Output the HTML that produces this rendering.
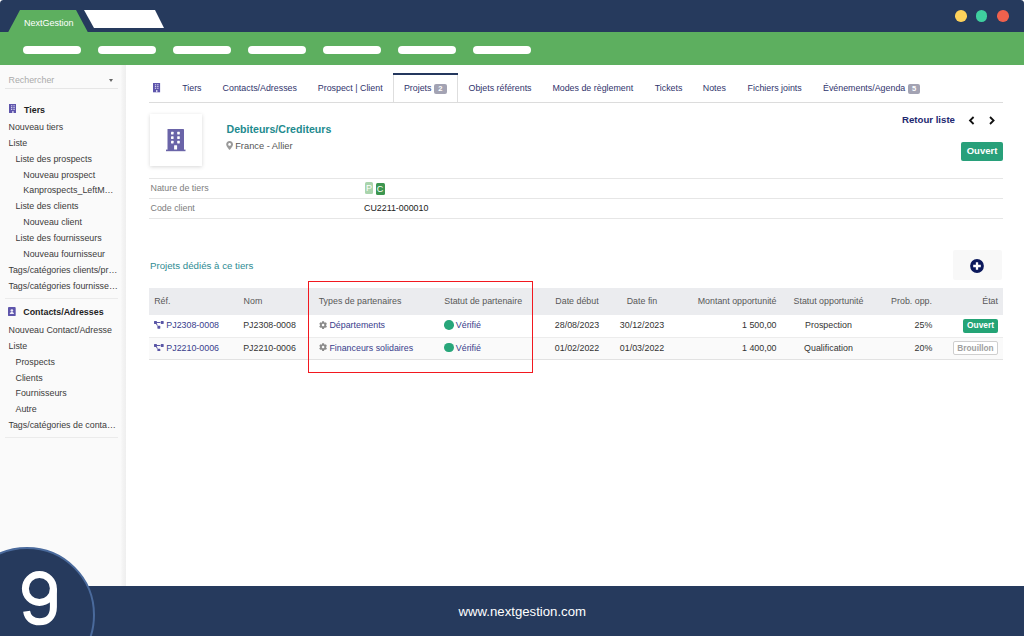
<!DOCTYPE html>
<html><head><meta charset="utf-8">
<style>
*{margin:0;padding:0;box-sizing:border-box}
html,body{width:1024px;height:636px;overflow:hidden;background:#fff}
body{position:relative;font-family:"Liberation Sans",sans-serif;font-size:8.87px;color:#333}
.a{position:absolute}
.t{position:absolute;white-space:nowrap;line-height:1}
.pill{position:absolute;top:45.8px;width:57.2px;height:8px;border-radius:4px;background:#fff}
.dot{position:absolute;top:10.1px;width:11.7px;height:11.7px;border-radius:50%}
.si{position:absolute;white-space:nowrap;line-height:1;color:#3a3a3a}
.tab{position:absolute;white-space:nowrap;line-height:1;color:#30346c;top:83.7px}
.badge{background:#a3a3b3;color:#fff;font-weight:bold;border-radius:2px}
</style></head><body>
<div class="a" style="left:0;top:0;width:1024px;height:32px;background:#263a5d;border-radius:3.5px 3.5px 0 0"></div>
<svg class="a" style="left:0;top:0" width="200" height="33">
<polygon points="8,32.5 20,10 76,10 88,32.5" fill="#5daf5f"/>
<polygon points="84,10 155,10 164,28 94,28" fill="#fff"/>
</svg>
<div class="t" style="left:24px;top:19px;font-size:9px;color:#fff">NextGestion</div>
<div class="a" style="left:0;top:32px;width:1024px;height:33px;background:#5daf5f"></div>
<div class="pill" style="left:23.4px"></div>
<div class="pill" style="left:98.4px"></div>
<div class="pill" style="left:173.4px"></div>
<div class="pill" style="left:248.4px"></div>
<div class="pill" style="left:323.4px"></div>
<div class="pill" style="left:398.4px"></div>
<div class="pill" style="left:473.4px"></div>
<div class="dot" style="left:954.9px;background:#fdd15b"></div>
<div class="dot" style="left:975.6px;background:#3fcf9f"></div>
<div class="dot" style="left:996.9px;background:#ef614d"></div>
<div class="a" style="left:0;top:65px;width:126px;height:521px;background:linear-gradient(to right,#fafafa 0,#fafafa 120.5px,#f3f3f3 123px,#efefef 126px)"></div>
<div class="t" style="left:8.5px;top:75.8px;color:#aaa">Rechercher</div>
<div class="a" style="left:109px;top:79px;width:0;height:0;border-left:2.5px solid transparent;border-right:2.5px solid transparent;border-top:3px solid #666"></div>
<div class="a" style="left:5px;top:88px;width:113px;height:1px;background:#e6e6e6"></div>
<div class="si" style="left:8.5px;top:122.89px">Nouveau tiers</div>
<div class="si" style="left:8.5px;top:138.77px">Liste</div>
<div class="si" style="left:15.5px;top:154.65px">Liste des prospects</div>
<div class="si" style="left:23.3px;top:170.53px">Nouveau prospect</div>
<div class="si" style="left:23.3px;top:186.41px">Kanprospects_LeftM…</div>
<div class="si" style="left:15.5px;top:202.29px">Liste des clients</div>
<div class="si" style="left:23.3px;top:218.17px">Nouveau client</div>
<div class="si" style="left:15.5px;top:234.05px">Liste des fournisseurs</div>
<div class="si" style="left:23.3px;top:249.93px">Nouveau fournisseur</div>
<div class="si" style="left:8.5px;top:265.81px">Tags/catégories clients/pr…</div>
<div class="si" style="left:8.5px;top:281.69px">Tags/catégories fournisse…</div>
<div class="si" style="left:8.5px;top:325.89px">Nouveau Contact/Adresse</div>
<div class="si" style="left:8.5px;top:341.79px">Liste</div>
<div class="si" style="left:15.5px;top:357.69px">Prospects</div>
<div class="si" style="left:15.5px;top:373.59px">Clients</div>
<div class="si" style="left:15.5px;top:389.49px">Fournisseurs</div>
<div class="si" style="left:15.5px;top:405.39px">Autre</div>
<div class="si" style="left:8.5px;top:421.29px">Tags/catégories de conta…</div>
<svg class="a" style="left:8.7px;top:104.1px" width="7.4" height="9.4" viewBox="0 0 7.1 9.3" preserveAspectRatio="none">
<rect x="0" y="0" width="7.1" height="9.3" fill="#5e55ab"/>
<g fill="#d4d0ee"><rect x="1.9" y="1.2" width="1.3" height="1.1"/><rect x="4.2" y="1.2" width="1.3" height="1.1"/>
<rect x="1.9" y="3" width="1.3" height="1.1"/><rect x="4.2" y="3" width="1.3" height="1.1"/>
<rect x="1.9" y="4.8" width="1.3" height="1.1"/><rect x="4.2" y="4.8" width="1.3" height="1.1"/></g>
<rect x="3.1" y="7" width="1.3" height="2.3" fill="#e6e3f6"/>
</svg>
<div class="t" style="left:24px;top:106px;font-weight:bold;color:#222">Tiers</div>
<div class="a" style="left:5px;top:298px;width:113px;height:1px;background:#ebebeb"></div>
<svg class="a" style="left:8.4px;top:306.7px" width="7.7" height="9.1" viewBox="0 0 7.7 9.1">
<rect x="0" y="0" width="7.7" height="9.1" rx="0.9" fill="#5e55ab"/>
<circle cx="3.85" cy="3.5" r="1.35" fill="#eceaf7"/>
<path d="M1.7 6.9 C1.9 5.4 2.8 5 3.85 5 C4.9 5 5.8 5.4 6 6.9 Z" fill="#eceaf7"/>
</svg>
<div class="t" style="left:23.3px;top:308px;font-weight:bold;color:#222">Contacts/Adresses</div>
<div class="a" style="left:5px;top:437px;width:113px;height:1px;background:#ebebeb"></div>
<svg class="a" style="left:153.1px;top:82.8px" width="8" height="10" viewBox="0 0 8 10">
<rect x="0" y="0" width="7.1" height="9.3" fill="#5e55ab"/>
<g fill="#d4d0ee"><rect x="1.9" y="1.2" width="1.3" height="1.1"/><rect x="4.2" y="1.2" width="1.3" height="1.1"/>
<rect x="1.9" y="3" width="1.3" height="1.1"/><rect x="4.2" y="3" width="1.3" height="1.1"/>
<rect x="1.9" y="4.8" width="1.3" height="1.1"/><rect x="4.2" y="4.8" width="1.3" height="1.1"/></g>
<rect x="3.1" y="7" width="1.3" height="2.3" fill="#e6e3f6"/>
</svg>
<div class="a" style="left:149px;top:102px;width:854px;height:1px;background:#dcdcdc"></div>
<div class="a" style="left:393px;top:74px;width:65px;height:28px;background:#fff;border:1px solid #dedede;border-bottom:none"></div>
<div class="a" style="left:393px;top:73.2px;width:65px;height:2px;background:#24375e"></div>
<div class="tab" style="left:182.2px">Tiers</div>
<div class="tab" style="left:222.6px">Contacts/Adresses</div>
<div class="tab" style="left:317.8px">Prospect | Client</div>
<div class="tab" style="left:403.9px">Projets</div>
<div class="tab" style="left:468.5px">Objets référents</div>
<div class="tab" style="left:552.4px">Modes de règlement</div>
<div class="tab" style="left:654.7px">Tickets</div>
<div class="tab" style="left:702.8px">Notes</div>
<div class="tab" style="left:747.6px">Fichiers joints</div>
<div class="tab" style="left:823px">Événements/Agenda</div>
<div class="a badge" style="left:434px;top:84px;width:12.7px;height:10px;font-size:7.6px;line-height:10.5px;text-align:center">2</div>
<div class="a badge" style="left:907.8px;top:84px;width:12.5px;height:10px;font-size:7.6px;line-height:10.5px;text-align:center">5</div>
<div class="a" style="left:149.5px;top:113.5px;width:52.5px;height:52.5px;background:#fff;box-shadow:0 1px 4px rgba(0,0,0,0.16)"></div>
<svg class="a" style="left:166px;top:128.5px" width="20" height="23" viewBox="0 0 20 23">
<rect x="1.5" y="0" width="16.5" height="21.2" rx="0.6" fill="#6a64a8"/>
<rect x="0" y="20.6" width="19.5" height="1.6" fill="#6a64a8"/>
<g fill="#fff">
<rect x="5" y="2.8" width="2.6" height="2.6" rx="0.4"/><rect x="11.2" y="2.8" width="2.6" height="2.6" rx="0.4"/>
<rect x="5" y="7.3" width="2.6" height="2.6" rx="0.4"/><rect x="11.2" y="7.3" width="2.6" height="2.6" rx="0.4"/>
<rect x="5" y="11.8" width="2.6" height="2.6" rx="0.4"/><rect x="11.2" y="11.8" width="2.6" height="2.6" rx="0.4"/>
<rect x="8.1" y="16.2" width="3" height="4.4" rx="0.4"/>
</g>
</svg>
<div class="t" style="left:226.5px;top:123.8px;font-size:10.6px;font-weight:bold;color:#228a8e">Debiteurs/Crediteurs</div>
<svg class="a" style="left:225.9px;top:140.7px" width="7.5" height="9.2" viewBox="0 0 7.5 9">
<path d="M3.6 0 C1.6 0 0.2 1.5 0.2 3.3 C0.2 5.3 3.6 8.8 3.6 8.8 C3.6 8.8 7 5.3 7 3.3 C7 1.5 5.6 0 3.6 0 Z M3.6 1.9 C4.4 1.9 5 2.5 5 3.3 C5 4.1 4.4 4.7 3.6 4.7 C2.8 4.7 2.2 4.1 2.2 3.3 C2.2 2.5 2.8 1.9 3.6 1.9 Z" fill="#9a9a9a" fill-rule="evenodd"/>
</svg>
<div class="t" style="left:235.2px;top:141.9px;font-size:9.3px;color:#555">France - Allier</div>
<div class="t" style="left:902px;top:115.4px;font-size:9.65px;font-weight:bold;color:#1e2870">Retour liste</div>
<svg class="a" style="left:968px;top:116px" width="30" height="9" viewBox="0 0 30 9">
<path d="M5.6 1 L2 4.5 L5.6 8" stroke="#111" stroke-width="1.8" fill="none"/>
<path d="M22 1 L25.6 4.5 L22 8" stroke="#111" stroke-width="1.8" fill="none"/>
</svg>
<div class="a" style="left:961px;top:142px;width:42px;height:19px;background:#28a07a;border-radius:2px;color:#fff;font-weight:bold;font-size:9.5px;line-height:18px;text-align:center">Ouvert</div>
<div class="a" style="left:149px;top:178px;width:854px;height:1px;background:#e6e6e6"></div>
<div class="a" style="left:149px;top:198px;width:854px;height:1px;background:#e6e6e6"></div>
<div class="a" style="left:149px;top:218px;width:854px;height:1px;background:#e6e6e6"></div>
<div class="t" style="left:150.5px;top:184.3px;color:#7d7d7d">Nature de tiers</div>
<div class="t" style="left:150.5px;top:203.9px;color:#7d7d7d">Code client</div>
<div class="a" style="left:365px;top:182.3px;width:8px;height:12px;background:#a9d4ac;border-radius:1.5px;color:#fff;font-size:9px;line-height:12.5px;text-align:center">P</div>
<div class="a" style="left:375.6px;top:182.5px;width:9px;height:12px;background:#3d9650;border-radius:1.5px;color:#fff;font-size:9px;line-height:12.5px;text-align:center">C</div>
<div class="t" style="left:364px;top:203.9px;color:#222">CU2211-000010</div>
<div class="t" style="left:150px;top:260.5px;font-size:9.7px;color:#2f8c93">Projets dédiés à ce tiers</div>
<div class="a" style="left:953px;top:250px;width:48.5px;height:29.5px;background:#f8f8f8;border-radius:2px"></div>
<svg class="a" style="left:970px;top:258.8px" width="14" height="14" viewBox="0 0 14 14">
<circle cx="7" cy="7" r="6.9" fill="#0c195c"/>
<path d="M7 3.2 V10.8 M3.2 7 H10.8" stroke="#fff" stroke-width="2.3"/>
</svg>
<div class="a" style="left:149px;top:288px;width:853.5px;height:26.5px;background:#ebecef"></div>
<div class="a" style="left:149px;top:337px;width:853.5px;height:1px;background:#ececec"></div>
<div class="a" style="left:149px;top:338px;width:853.5px;height:21px;background:#fafafa"></div>
<div class="a" style="left:149px;top:359px;width:853.5px;height:1px;background:#e2e2e2"></div>
<div class="t" style="left:154.2px;top:297.49px;color:#585858;">Réf.</div>
<div class="t" style="left:243.6px;top:297.49px;color:#585858;">Nom</div>
<div class="t" style="left:318.7px;top:297.49px;color:#585858;">Types de partenaires</div>
<div class="t" style="left:444.3px;top:297.49px;color:#585858;">Statut de partenaire</div>
<div class="t" style="left:527px;width:100px;text-align:center;top:297.49px;color:#585858;">Date début</div>
<div class="t" style="left:592px;width:100px;text-align:center;top:297.49px;color:#585858;">Date fin</div>
<div class="t" style="left:626.5px;width:150px;text-align:right;top:297.49px;color:#585858;">Montant opportunité</div>
<div class="t" style="left:778.5px;width:100px;text-align:center;top:297.49px;color:#585858;">Statut opportunité</div>
<div class="t" style="left:782px;width:150px;text-align:right;top:297.49px;color:#585858;">Prob. opp.</div>
<div class="t" style="left:848px;width:150px;text-align:right;top:297.49px;color:#585858;">État</div>
<svg class="a" style="left:154.1px;top:321.3px" width="9.7" height="7.8" viewBox="0 0 640 512"><path fill="#5a56a6" d="M384 320H256c-17.67 0-32 14.330-32 32v128c0 17.670 14.330 32 32 32h128c17.670 0 32-14.330 32-32V352c0-17.670-14.330-32-32-32zM192 32c0-17.670-14.330-32-32-32H32C14.330 0 0 14.330 0 32v128c0 17.670 14.330 32 32 32h95.720l73.160 128.040C211.980 300.980 232.400 288 256 288h.28L192 175.510V128h224V64H192V32zM608 0H480c-17.670 0-32 14.330-32 32v128c0 17.670 14.330 32 32 32h128c17.670 0 32-14.330 32-32V32c0-17.670-14.330-32-32-32z"/></svg>
<div class="t" style="left:166.3px;top:321.49px;color:#383d8c;">PJ2308-0008</div>
<div class="t" style="left:243.2px;top:321.49px;color:#333;">PJ2308-0008</div>
<svg class="a" style="left:318.9px;top:320.7px" width="8.2" height="8.2" viewBox="0 0 512 512"><path fill="#8a8a8a" d="M487.4 315.7l-42.6-24.6c4.3-23.2 4.3-47 0-70.2l42.6-24.6c4.9-2.8 7.1-8.6 5.5-14-11.1-35.6-30-67.8-54.7-94.6-3.8-4.1-10-5.1-14.8-2.3L380.8 110c-17.9-15.4-38.5-27.3-60.8-35.1V25.8c0-5.6-3.9-10.5-9.4-11.7-36.7-8.2-74.3-7.8-109.2 0-5.5 1.2-9.4 6.1-9.4 11.7V75c-22.2 7.9-42.8 19.8-60.8 35.1L88.7 85.5c-4.9-2.8-11-1.9-14.8 2.3-24.7 26.7-43.6 58.9-54.7 94.6-1.7 5.4.6 11.2 5.5 14L67.3 221c-4.3 23.2-4.3 47 0 70.2l-42.6 24.6c-4.9 2.8-7.1 8.6-5.5 14 11.1 35.6 30 67.8 54.7 94.6 3.8 4.1 10 5.1 14.8 2.3l42.6-24.6c17.9 15.4 38.5 27.3 60.8 35.1v49.2c0 5.6 3.9 10.5 9.4 11.7 36.7 8.2 74.3 7.8 109.2 0 5.5-1.2 9.4-6.1 9.4-11.7v-49.2c22.2-7.9 42.8-19.8 60.8-35.1l42.6 24.6c4.9 2.8 11 1.9 14.8-2.3 24.7-26.7 43.6-58.9 54.7-94.6 1.5-5.5-.7-11.3-5.6-14.1zM256 336c-44.1 0-80-35.9-80-80s35.9-80 80-80 80 35.9 80 80-35.9 80-80 80z"/></svg>
<div class="t" style="left:329.4px;top:321.49px;color:#383d8c;">Départements</div>
<div class="a" style="left:444.1px;top:320.2px;width:9.7px;height:9.7px;border-radius:50%;background:#28a67a"></div>
<div class="t" style="left:455.8px;top:321.49px;color:#383d8c;">Vérifié</div>
<div class="t" style="left:527px;width:100px;text-align:center;top:321.49px;color:#333;">28/08/2023</div>
<div class="t" style="left:592px;width:100px;text-align:center;top:321.49px;color:#333;">30/12/2023</div>
<div class="t" style="left:626.5px;width:150px;text-align:right;top:321.49px;color:#333;">1 500,00</div>
<div class="t" style="left:778.5px;width:100px;text-align:center;top:321.49px;color:#333;">Prospection</div>
<div class="t" style="left:782.3px;width:150px;text-align:right;top:321.49px;color:#333;">25%</div>
<svg class="a" style="left:154.1px;top:343.6px" width="9.7" height="7.8" viewBox="0 0 640 512"><path fill="#5a56a6" d="M384 320H256c-17.67 0-32 14.330-32 32v128c0 17.670 14.330 32 32 32h128c17.670 0 32-14.330 32-32V352c0-17.670-14.330-32-32-32zM192 32c0-17.670-14.330-32-32-32H32C14.330 0 0 14.330 0 32v128c0 17.670 14.330 32 32 32h95.720l73.160 128.040C211.980 300.980 232.400 288 256 288h.28L192 175.510V128h224V64H192V32zM608 0H480c-17.670 0-32 14.330-32 32v128c0 17.670 14.330 32 32 32h128c17.670 0 32-14.330 32-32V32c0-17.670-14.330-32-32-32z"/></svg>
<div class="t" style="left:166.3px;top:343.79px;color:#383d8c;">PJ2210-0006</div>
<div class="t" style="left:243.2px;top:343.79px;color:#333;">PJ2210-0006</div>
<svg class="a" style="left:318.9px;top:343.0px" width="8.2" height="8.2" viewBox="0 0 512 512"><path fill="#8a8a8a" d="M487.4 315.7l-42.6-24.6c4.3-23.2 4.3-47 0-70.2l42.6-24.6c4.9-2.8 7.1-8.6 5.5-14-11.1-35.6-30-67.8-54.7-94.6-3.8-4.1-10-5.1-14.8-2.3L380.8 110c-17.9-15.4-38.5-27.3-60.8-35.1V25.8c0-5.6-3.9-10.5-9.4-11.7-36.7-8.2-74.3-7.8-109.2 0-5.5 1.2-9.4 6.1-9.4 11.7V75c-22.2 7.9-42.8 19.8-60.8 35.1L88.7 85.5c-4.9-2.8-11-1.9-14.8 2.3-24.7 26.7-43.6 58.9-54.7 94.6-1.7 5.4.6 11.2 5.5 14L67.3 221c-4.3 23.2-4.3 47 0 70.2l-42.6 24.6c-4.9 2.8-7.1 8.6-5.5 14 11.1 35.6 30 67.8 54.7 94.6 3.8 4.1 10 5.1 14.8 2.3l42.6-24.6c17.9 15.4 38.5 27.3 60.8 35.1v49.2c0 5.6 3.9 10.5 9.4 11.7 36.7 8.2 74.3 7.8 109.2 0 5.5-1.2 9.4-6.1 9.4-11.7v-49.2c22.2-7.9 42.8-19.8 60.8-35.1l42.6 24.6c4.9 2.8 11 1.9 14.8-2.3 24.7-26.7 43.6-58.9 54.7-94.6 1.5-5.5-.7-11.3-5.6-14.1zM256 336c-44.1 0-80-35.9-80-80s35.9-80 80-80 80 35.9 80 80-35.9 80-80 80z"/></svg>
<div class="t" style="left:329.4px;top:343.79px;color:#383d8c;">Financeurs solidaires</div>
<div class="a" style="left:444.1px;top:342.5px;width:9.7px;height:9.7px;border-radius:50%;background:#28a67a"></div>
<div class="t" style="left:455.8px;top:343.79px;color:#383d8c;">Vérifié</div>
<div class="t" style="left:527px;width:100px;text-align:center;top:343.79px;color:#333;">01/02/2022</div>
<div class="t" style="left:592px;width:100px;text-align:center;top:343.79px;color:#333;">01/03/2022</div>
<div class="t" style="left:626.5px;width:150px;text-align:right;top:343.79px;color:#333;">1 400,00</div>
<div class="t" style="left:778.5px;width:100px;text-align:center;top:343.79px;color:#333;">Qualification</div>
<div class="t" style="left:782.3px;width:150px;text-align:right;top:343.79px;color:#333;">20%</div>
<div class="a" style="left:963px;top:318.7px;width:35px;height:14px;background:#24a476;border-radius:2px;color:#fff;font-weight:bold;font-size:8.4px;line-height:13.4px;text-align:center">Ouvert</div>
<div class="a" style="left:953px;top:341px;width:45px;height:14px;background:#fff;border:1px solid #cfcfcf;border-radius:2px;color:#a0a0a0;font-weight:bold;font-size:8.3px;line-height:12.2px;text-align:center">Brouillon</div>
<div class="a" style="left:307.7px;top:281px;width:225.4px;height:92.1px;border:1.9px solid #f2181f"></div>
<div class="a" style="left:0;top:586px;width:1024px;height:50px;background:#263a5d"></div>
<div class="t" style="left:458.5px;top:605px;font-size:13.2px;color:#fff">www.nextgestion.com</div>
<div class="a" style="left:-41px;top:547px;width:136px;height:136px;border-radius:50%;background:#263a5d;border:2.3px solid #4a6a9c"></div>
<svg class="a" style="left:0;top:560px" width="80" height="76" viewBox="0 560 80 76">
<circle cx="39.4" cy="588.5" r="14" fill="none" stroke="#fff" stroke-width="7"/>
<path d="M53.4 588.5 V607 C53.4 616.5 47.5 621.8 39.5 621.8 C32.5 621.8 27.6 618.2 26.6 611.3" fill="none" stroke="#fff" stroke-width="7"/>
</svg>
</body></html>
